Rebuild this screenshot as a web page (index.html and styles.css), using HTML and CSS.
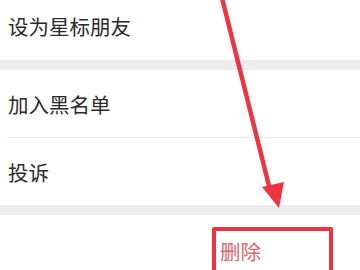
FILE: index.html
```html
<!DOCTYPE html>
<html lang="zh-CN">
<head>
  <meta charset="UTF-8">
  <meta name="viewport" content="width=device-width, initial-scale=1.0">
  <title>资料设置</title>
  <link rel="stylesheet" href="styles.css">
</head>
<body>
  <main class="page">
    <div class="group">
      <div class="cell cell-first">设为星标朋友</div>
    </div>
    <div class="gap"></div>
    <div class="group">
      <div class="cell">加入黑名单</div>
      <div class="line"></div>
      <div class="cell">投诉</div>
    </div>
    <div class="gap"></div>
    <div class="group">
      <div class="cell cell-del"><span class="del">删除</span></div>
    </div>

    <!-- 标注 -->
    <svg class="arrow" width="360" height="270" viewBox="0 0 360 270">
      <line x1="222" y1="-2" x2="269" y2="186" stroke="#ee3340" stroke-width="4.5"/>
      <polygon points="262,187 284,182 279,208" fill="#ee3340"/>
    </svg>
    <div class="mark"></div>
  </main>
</body>
</html>
```

FILE: styles.css
```css
body,
main,
div,
span {
  margin: 0;
  padding: 0;
  border: 0;
}

body {
  background: #fff;
  font-family: "Noto Sans CJK SC", "Noto Sans", sans-serif;
  color: #2b2b2b;
}

.page {
  position: relative;
  width: 360px;
  height: 270px;
  overflow: hidden;
}

.group {
  background: #fff;
}

.cell {
  display: flex;
  align-items: center;
  height: 67px;
  padding-left: 8px;
  font-size: 20.5px;
}

.cell-first {
  height: 60px;
  padding-bottom: 8px;
  box-sizing: border-box;
}

.line {
  height: 1px;
  margin-left: 7px;
  background: #ececec;
}

.gap {
  height: 10px;
  background: #ededed;
}

.cell-del {
  height: 53px;
  padding-left: 220px;
  padding-top: 18px;
  box-sizing: border-box;
}

.del {
  color: #d9666a;
}

.arrow {
  position: absolute;
  left: 0;
  top: 0;
}

.mark {
  position: absolute;
  left: 212px;
  top: 227px;
  width: 113px;
  height: 60px;
  border: 4px solid #ee3340;
  border-radius: 2px;
}
```
